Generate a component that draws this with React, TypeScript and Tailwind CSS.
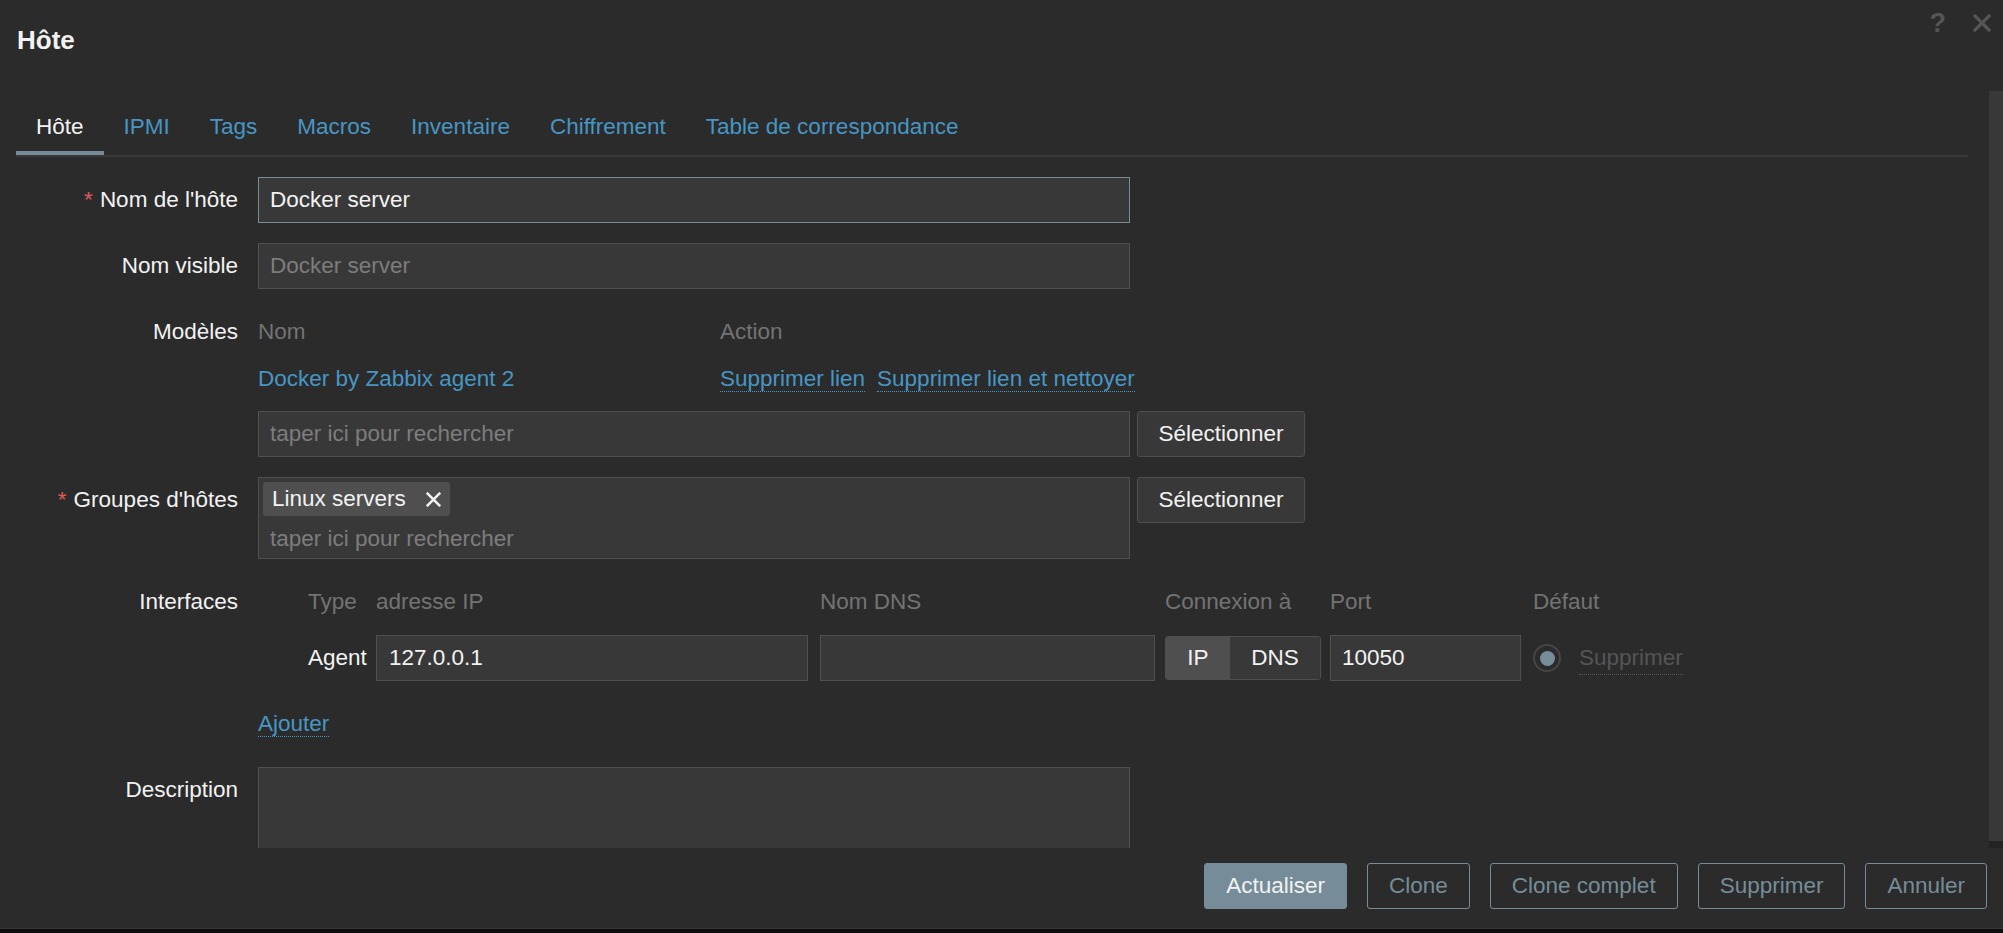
import React from 'react'

const tabs = ['Hôte', 'IPMI', 'Tags', 'Macros', 'Inventaire', 'Chiffrement', 'Table de correspondance']

function XIcon({ className, size = 18, stroke = 3 }: { className?: string; size?: number; stroke?: number }) {
  return (
    <svg width={size} height={size} viewBox="0 0 18 18" className={className}>
      <path d="M2 2 L16 16 M16 2 L2 16" stroke="currentColor" strokeWidth={stroke} strokeLinecap="square" />
    </svg>
  )
}

function Label({ children, required }: { children: React.ReactNode; required?: boolean }) {
  return (
    <div className="text-right leading-[46px] text-[#f2f2f2] whitespace-nowrap">
      {required && <span className="text-[#e45959] mr-[7px]">*</span>}
      {children}
    </div>
  )
}

function ActionLink({ children, muted }: { children: React.ReactNode; muted?: boolean }) {
  return (
    <span
      className={
        muted
          ? 'text-[#555555] border-b border-dotted border-[#555555]'
          : 'text-[#4796c4] border-b border-dotted border-[#4796c4]'
      }
    >
      {children}
    </span>
  )
}

function SelectButton() {
  return (
    <button className="h-[46px] w-[168px] shrink-0 rounded-[3px] border border-[#4f4f4f] bg-[#383838] text-[#f2f2f2]">
      Sélectionner
    </button>
  )
}

export default function App() {
  return (
    <div className="h-[933px] w-full overflow-hidden bg-[#0e0e0e] font-['Liberation_Sans',Arial,sans-serif] text-[22.5px] text-[#f2f2f2]">
      <div className="flex h-[929px] flex-col border-b border-[#383838] bg-[#2b2b2b]">
        {/* Header */}
        <div className="flex h-[91px] shrink-0 items-start justify-between pl-[17px] pr-[12px]">
          <div className="pt-[25px] text-[26px] font-bold leading-[30px]">Hôte</div>
          <div className="flex items-center gap-[27px] pt-[8px] text-[#555555]">
            <span className="text-[27px] font-bold leading-[30px]">?</span>
            <XIcon size={18} stroke={3.2} />
          </div>
        </div>

        {/* Body */}
        <div className="flex h-[757px] shrink-0">
          <div className="min-w-0 flex-1 overflow-hidden pl-4 pr-[21px]">
            <div className="flex border-b-2 border-[#383838]">
              {tabs.map((t, i) => (
                <div
                  key={t}
                  className={
                    i === 0
                      ? 'border-b-4 border-[#768d99] px-5 pb-[9px] pt-[21px] leading-[30px] text-[#f2f2f2]'
                      : 'border-b-4 border-transparent px-5 pb-[9px] pt-[21px] leading-[30px] text-[#4796c4]'
                  }
                >
                  {t}
                </div>
              ))}
            </div>

            <div className="grid grid-cols-[222px_1fr] gap-x-5 gap-y-5 pt-5">
              <Label required>Nom de l'hôte</Label>
              <div className="flex h-[46px] w-[872px] items-center border border-[#768d99] bg-[#383838] px-[11px]">
                Docker server
              </div>

              <Label>Nom visible</Label>
              <div className="flex h-[46px] w-[872px] items-center border border-[#4f4f4f] bg-[#383838] px-[11px] text-[#7d7d7d]">
                Docker server
              </div>

              <Label>Modèles</Label>
              <div>
                <div className="grid h-[46px] grid-cols-[462px_1fr] leading-[46px] text-[#737373]">
                  <span>Nom</span>
                  <span>Action</span>
                </div>
                <div className="grid h-[48px] grid-cols-[462px_1fr] leading-[48px]">
                  <span className="text-[#4796c4]">Docker by Zabbix agent 2</span>
                  <div className="flex gap-3">
                    <span><ActionLink>Supprimer lien</ActionLink></span>
                    <span><ActionLink>Supprimer lien et nettoyer</ActionLink></span>
                  </div>
                </div>
                <div className="mt-2 flex gap-[7px]">
                  <div className="flex h-[46px] w-[872px] items-center border border-[#4f4f4f] bg-[#383838] px-[11px] text-[#7d7d7d]">
                    taper ici pour rechercher
                  </div>
                  <SelectButton />
                </div>
              </div>

              <Label required>Groupes d'hôtes</Label>
              <div className="flex items-start gap-[7px]">
                <div className="h-[82px] w-[872px] border border-[#4f4f4f] bg-[#383838] p-[4px]">
                  <div className="flex h-[34px] w-fit items-center gap-5 rounded-[3px] bg-[#4f4f4f] pl-[9px] pr-[9px]">
                    <span>Linux servers</span>
                    <XIcon size={15} stroke={3} className="text-[#f2f2f2]" />
                  </div>
                  <div className="mt-[8px] pl-[7px] leading-[30px] text-[#7d7d7d]">taper ici pour rechercher</div>
                </div>
                <SelectButton />
              </div>

              <Label>Interfaces</Label>
              <div>
                <div className="flex h-[46px] items-center text-[#737373]">
                  <div className="w-[118px] pl-[50px]">Type</div>
                  <div className="w-[444px]">adresse IP</div>
                  <div className="w-[345px]">Nom DNS</div>
                  <div className="w-[165px]">Connexion à</div>
                  <div className="w-[203px]">Port</div>
                  <div>Défaut</div>
                </div>
                <div className="mt-[10px] flex h-[46px] items-center">
                  <div className="w-[118px] pl-[50px]">Agent</div>
                  <div className="w-[444px]">
                    <div className="flex h-[46px] w-[432px] items-center border border-[#4f4f4f] bg-[#383838] px-[12px]">127.0.0.1</div>
                  </div>
                  <div className="w-[345px]">
                    <div className="h-[46px] w-[335px] border border-[#4f4f4f] bg-[#383838]"></div>
                  </div>
                  <div className="w-[165px]">
                    <div className="flex h-[44px] w-[156px] overflow-hidden rounded-[3px] border border-[#4f4f4f]">
                      <div className="flex w-[64px] items-center justify-center bg-[#4f4f4f]">IP</div>
                      <div className="flex flex-1 items-center justify-center bg-[#383838]">DNS</div>
                    </div>
                  </div>
                  <div className="w-[203px]">
                    <div className="flex h-[46px] w-[191px] items-center border border-[#4f4f4f] bg-[#383838] px-[11px]">10050</div>
                  </div>
                  <div className="flex items-center gap-[18px]">
                    <div className="flex h-[28px] w-[28px] items-center justify-center rounded-full border-2 border-[#454545] bg-[#2b2b2b]">
                      <div className="h-[15px] w-[15px] rounded-full bg-[#768d99]"></div>
                    </div>
                    <ActionLink muted>Supprimer</ActionLink>
                  </div>
                </div>
                <div className="mt-5 h-[46px] leading-[46px]">
                  <ActionLink>Ajouter</ActionLink>
                </div>
              </div>

              <Label>Description</Label>
              <div className="h-[150px] w-[872px] border border-[#4f4f4f] bg-[#383838]"></div>
            </div>
          </div>

          {/* Scrollbar */}
          <div className="flex w-[14px] shrink-0 flex-col bg-[#232323]">
            <div className="h-[750px] bg-[#383838]"></div>
          </div>
        </div>

        {/* Footer */}
        <div className="flex flex-1 items-start justify-end gap-5 pr-4 pt-[15px]">
          <button className="h-[46px] rounded-[3px] border border-[#768d99] bg-[#768d99] px-[21px] text-[#f2f2f2]">Actualiser</button>
          <button className="h-[46px] rounded-[3px] border border-[#768d99] px-[21px] text-[#768d99]">Clone</button>
          <button className="h-[46px] rounded-[3px] border border-[#768d99] px-[21px] text-[#768d99]">Clone complet</button>
          <button className="h-[46px] rounded-[3px] border border-[#768d99] px-[21px] text-[#768d99]">Supprimer</button>
          <button className="h-[46px] rounded-[3px] border border-[#768d99] px-[21px] text-[#768d99]">Annuler</button>
        </div>
      </div>
    </div>
  )
}
